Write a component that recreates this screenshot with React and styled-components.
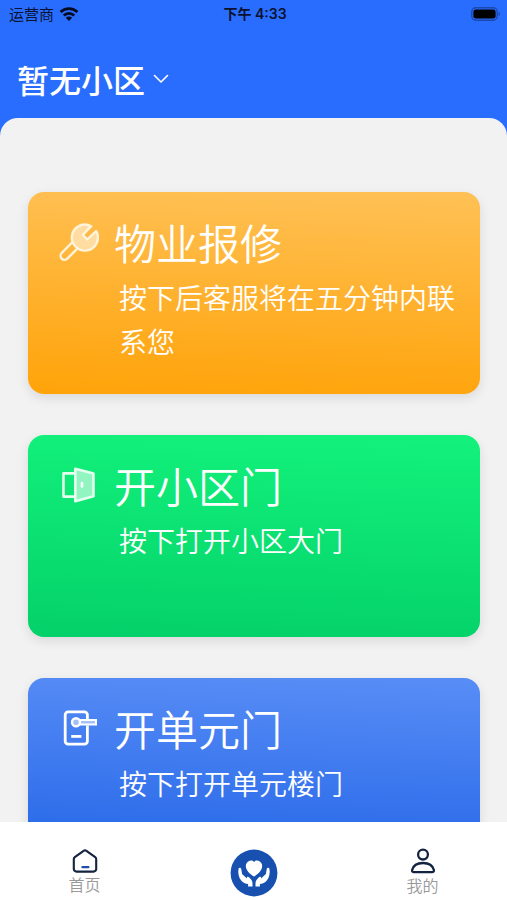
import styled, { createGlobalStyle } from "styled-components";

const WifiIcon = () => (
  <svg width="20" height="14" viewBox="0 0 20 14" fill="none" stroke="#050a20" strokeWidth="2.8">
    <path d="M1.6 5a12 12 0 0 1 16.8 0" />
    <path d="M4.8 8.5a7.4 7.4 0 0 1 10.4 0" />
    <path d="M10 14 6.8 10.8a4.5 4.5 0 0 1 6.4 0z" fill="#050a20" stroke="none" />
  </svg>
);

const BatteryIcon = () => (
  <svg width="30" height="14" viewBox="0 0 30 14">
    <rect x="0.8" y="0.8" width="25.4" height="12.4" rx="4" fill="none" stroke="#1b47ae" strokeWidth="1.4" />
    <rect x="2.4" y="2.4" width="22.2" height="9.2" rx="2.4" fill="#000" />
    <path d="M27.6 4.8c1.8.6 1.8 3.8 0 4.4z" fill="#1b47ae" />
  </svg>
);

const ChevronIcon = () => (
  <svg width="16" height="10" viewBox="0 0 16 10" fill="none" stroke="#fff" strokeWidth="1.6">
    <path d="m1.5 1.5 6.5 6.5 6.5-6.5" strokeLinecap="round" strokeLinejoin="round" />
  </svg>
);

const WrenchIcon = () => (
  <svg width="40" height="40" viewBox="0 0 40 40" fill="none" stroke="#fff3dc" strokeWidth="2.4" strokeLinejoin="round">
    <path d="M13 20.5 2.7 31a4 4 0 0 0 0 5.6 4 4 0 0 0 5.6 0L18.6 26.4" strokeLinecap="round" />
    <path
      d="M32.2 4.2A13 13 0 1 0 37.2 9.2L28.2 17.4 23.8 12.9z"
      fill="#fff"
      fillOpacity="0.5"
    />
  </svg>
);

const GateIcon = () => (
  <svg width="40" height="40" viewBox="0 0 40 40" fill="none" stroke="#e4ffef" strokeWidth="2.6" strokeLinejoin="round">
    <path d="M15.5 8.4H4.5v23.2h11" />
    <path d="m16.3 3.8 18.2 4.6v22.8l-18.2 5z" fill="#fff" fillOpacity="0.55" />
    <path d="M23 18v3.5" stroke="#fff" strokeLinecap="round" />
  </svg>
);

const LockIcon = () => (
  <svg width="40" height="40" viewBox="0 0 40 40" fill="none" stroke="#fff" strokeWidth="2.8">
    <path d="M28.4 11V6.8a3 3 0 0 0-3-3H9.2a3 3 0 0 0-3 3v26.4a3 3 0 0 0 3 3h16.2a3 3 0 0 0 3-3V17.5" />
    <path d="M20.6 12h16.4v4.6H20.6" fill="#fff" fillOpacity="0.5" strokeWidth="2" />
    <circle cx="17" cy="14.3" r="4" fill="#fff" fillOpacity="0.5" strokeWidth="2.4" />
    <path d="M12.2 28.4h10.2" />
  </svg>
);

const HomeIcon = () => (
  <svg width="26" height="24" viewBox="0 0 26 24" fill="none" stroke="#14233f" strokeWidth="2.1" strokeLinejoin="round">
    <path d="M11.6 1.8a2.4 2.4 0 0 1 2.8 0l8.8 6.4a2.4 2.4 0 0 1 1 2v9.8a2.6 2.6 0 0 1-2.6 2.6H4.4A2.6 2.6 0 0 1 1.8 20v-9.8a2.4 2.4 0 0 1 1-2z" />
    <path d="M10.4 18.2h6" stroke="#1f4fae" strokeWidth="2.2" strokeLinecap="round" />
  </svg>
);

const UserIcon = () => (
  <svg width="26" height="26" viewBox="0 0 26 26" fill="none" stroke="#14233f" strokeWidth="2.3">
    <circle cx="13" cy="6.6" r="4.9" />
    <path
      d="M4 24.2c-1.4 0-2.2-1-1.9-2.2C3.2 17.7 7.3 15 13 15s9.8 2.7 10.9 7c.3 1.2-.5 2.2-1.9 2.2z"
      strokeLinejoin="round"
    />
  </svg>
);

const hand =
  "M8.6 19.5c.8-1.2 2.4-.9 2.7.8l.8 4.6 4.8 4.6c-.4-1.6 1-2.400 2.400-1 2 2 3.200 3.600 3.200 6V37.500h-4.400v-2.400c-2.600-.7-5.200-1.500-6.900-3.700C8.600 28.500 7.700 23.500 8.600 19.500z";

const CareIcon = () => (
  <svg width="48" height="48" viewBox="0 0 48 48">
    <circle cx="24" cy="24" r="23.4" fill="#1850b0" />
    <g fill="#fff">
      <path d={hand} />
      <path d={hand} transform="translate(48) scale(-1 1)" />
      <path
        d="M24 27.600c-3.600-2.400-8.200-5.800-8.200-10.600a5.300 5.300 0 0 1 5.200-5.400c1.300 0 2.300.5 3 1.300.7-.8 1.700-1.300 3-1.300a5.300 5.300 0 0 1 5.200 5.400c0 4.800-4.600 8.200-8.200 10.600z"
        stroke="#1850b0"
        strokeWidth="2"
        paintOrder="stroke"
      />
    </g>
  </svg>
);

const actions = [
  {
    title: "物业报修",
    text: "按下后客服将在五分钟内联系您",
    icon: <WrenchIcon />,
    from: "#ffc156",
    to: "#ffa309",
  },
  {
    title: "开小区门",
    text: "按下打开小区大门",
    icon: <GateIcon />,
    from: "#13f27c",
    to: "#04d169",
  },
  {
    title: "开单元门",
    text: "按下打开单元楼门",
    icon: <LockIcon />,
    from: "#588df6",
    to: "#1f62e6",
  },
];

const App = () => {
  return (
    <Page>
      <GlobalStyle />
      <StatusBar>
        <Carrier>
          运营商
          <WifiIcon />
        </Carrier>
        <Time>下午 4:33</Time>
        <Battery>
          <BatteryIcon />
        </Battery>
      </StatusBar>
      <Header>
        <CommunityButton type="button" aria-haspopup="listbox">
          暂无小区
          <ChevronIcon />
        </CommunityButton>
      </Header>
      <Sheet>
        {actions.map(({ title, text, icon, from, to }) => (
          <ActionCard key={title} type="button" $from={from} $to={to}>
            {icon}
            <CardInfo>
              <CardTitle>{title}</CardTitle>
              <CardText>{text}</CardText>
            </CardInfo>
          </ActionCard>
        ))}
      </Sheet>
      <TabBar>
        <Tab href="#home">
          <HomeIcon />
          首页
        </Tab>
        <CareTab href="#care" aria-label="服务">
          <CareIcon />
        </CareTab>
        <Tab href="#mine">
          <UserIcon />
          我的
        </Tab>
      </TabBar>
    </Page>
  );
};

export default App;

const GlobalStyle = createGlobalStyle`
  * {
    box-sizing: border-box;
  }
  body {
    margin: 0;
    font-family: "Noto Sans CJK SC", sans-serif;
  }
  button {
    border: 0;
    padding: 0;
    background: none;
    font-family: inherit;
    cursor: pointer;
  }
`;

const Page = styled.div`
  display: flex;
  flex-direction: column;
  height: 100vh;
  background: #296dff;
`;

const StatusBar = styled.div`
  display: grid;
  grid-template-columns: 1fr auto 1fr;
  align-items: center;
  height: 28px;
  padding: 0 6px 0 9px;
  color: #0a1230;
  font-size: 15px;
  line-height: 20px;
`;

const Carrier = styled.div`
  display: flex;
  align-items: center;
  gap: 5px;
`;

const Time = styled.div`
  font-family: Inter, "Noto Sans CJK SC", sans-serif;
  font-size: 14px;
  font-weight: 600;
`;

const Battery = styled.div`
  display: flex;
  justify-content: flex-end;
`;

const Header = styled.header`
  display: flex;
  align-items: center;
  height: 90px;
  padding: 12px 17px 0;
`;

const CommunityButton = styled.button`
  display: flex;
  align-items: center;
  gap: 8px;
  color: #fff;
  font-size: 32px;
  font-weight: 500;
  line-height: 48px;
`;

const Sheet = styled.main`
  flex: 1;
  min-height: 0;
  display: flex;
  flex-direction: column;
  gap: 41px;
  padding: 74px 27px 40px 28px;
  overflow-y: auto;
  scrollbar-width: none;
  background: #f2f2f2;
  border-radius: 18px 18px 0 0;
`;

const ActionCard = styled.button`
  flex: none;
  display: flex;
  align-items: flex-start;
  gap: 15px;
  min-height: 202px;
  padding: 20px 20px 20px 31px;
  border-radius: 16px;
  background: linear-gradient(182deg, ${(p) => p.$from}, ${(p) => p.$to});
  box-shadow: 0 4px 12px rgba(0, 0, 0, 0.1);
  color: #fff;
  text-align: left;

  svg {
    flex: none;
    margin-top: 10px;
  }
`;

const CardInfo = styled.div`
  flex: 1;
`;

const CardTitle = styled.h2`
  margin: 0;
  font-size: 42px;
  font-weight: 350;
  line-height: 60px;
`;

const CardText = styled.p`
  margin: 0;
  padding: 3px 0 0 5px;
  font-size: 28px;
  font-weight: 350;
  line-height: 44px;
`;

const TabBar = styled.nav`
  flex: none;
  display: grid;
  grid-template-columns: repeat(3, 1fr);
  height: 78px;
  background: #fff;
`;

const Tab = styled.a`
  display: flex;
  flex-direction: column;
  align-items: center;
  justify-content: center;
  gap: 1px;
  padding-top: 21px;
  color: #999;
  font-size: 16px;
  font-weight: 350;
  line-height: 20px;
  text-decoration: none;
`;

const CareTab = styled(Tab)`
  padding-top: 24px;
`;
